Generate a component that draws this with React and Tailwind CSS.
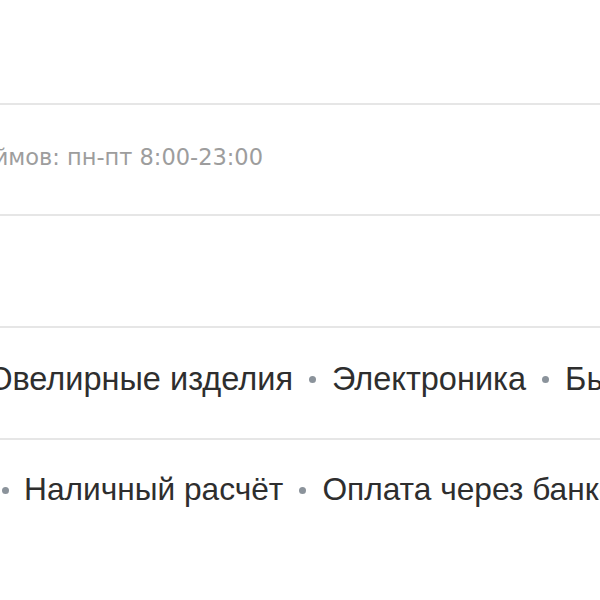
export default function App() {
  const dark = "text-[#2e2e2e]";
  const Dot = () => (
    <span className="inline-block w-[7px] h-[7px] rounded-full bg-[#8b939b] mx-[16px] shrink-0" />
  );
  return (
    <div className="w-[600px] h-[600px] overflow-hidden bg-white relative" style={{ fontFamily: '"Liberation Sans", Arial, sans-serif' }}>
      <div className="h-[103px]" />
      <div className="h-[111px] border-t-2 border-[#e6e6e6] flex items-center pb-[4px] overflow-hidden">
        <div className="w-[263px] shrink-0 flex justify-end whitespace-nowrap">
          <span className="text-[22.5px] text-[#9d9d9d]" style={{ fontFamily: '"DejaVu Sans", sans-serif' }}>
            Приём займов: пн-пт 8:00-23:00
          </span>
        </div>
      </div>
      <div className="h-[112px] border-t-2 border-[#e6e6e6]" />
      <div className="h-[112px] border-t-2 border-[#e6e6e6] flex items-center pb-[8px] overflow-hidden whitespace-nowrap">
        <div className={`w-[293px] shrink-0 flex justify-end text-[32.5px] ${dark}`}>
          <span>Ювелирные изделия</span>
        </div>
        <Dot />
        <span className={`text-[32.5px] ${dark}`}>Электроника</span>
        <Dot />
        <span className={`text-[32.5px] ${dark}`}>Бытовая техника</span>
      </div>
      <div className="h-[162px] border-t-2 border-[#e6e6e6] pt-[26px] overflow-hidden whitespace-nowrap">
        <div className="flex items-center h-[48px]">
          <span className="inline-block w-[7px] h-[7px] rounded-full bg-[#8b939b] ml-[2px] mr-[15px] shrink-0" />
          <span className={`text-[31.7px] ${dark}`}>Наличный расчёт</span>
          <Dot />
          <span className={`text-[31.7px] ${dark}`}>Оплата через банковскую карту</span>
        </div>
      </div>
    </div>
  );
}
